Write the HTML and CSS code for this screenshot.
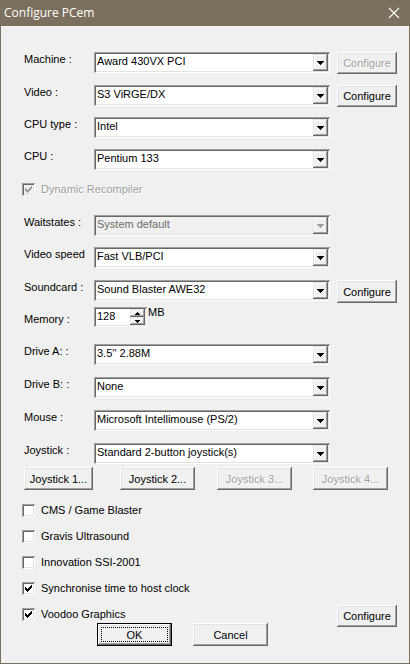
FILE: index.html
```html
<!DOCTYPE html>
<html>
<head>
<meta charset="utf-8">
<title>Configure PCem</title>
<link rel="stylesheet" href="styles.css">
</head>
<body>
<div class="window">
  <div class="titlebar">
    <span class="title">Configure PCem</span>
    <svg class="close" width="12" height="12" viewBox="0 0 12 12"><path d="M1 1L11 11M11 1L1 11" stroke="#fff" stroke-width="1.1" fill="none"/></svg>
  </div>
  <div class="client">
    <div class="row">
      <span class="lbl">Machine :</span>
      <div class="combo"><span class="val">Award 430VX PCI</span><span class="drop"><svg class="arr" width="7" height="4" viewBox="0 0 7 4"><path d="M0 0h7v1h-1v1h-1v1h-1v1h-1v-1h-1v-1h-1v-1h-1z"/></svg></span></div>
      <button class="btn cfg" disabled>Configure</button>
    </div>
    <div class="row gap12">
      <span class="lbl">Video :</span>
      <div class="combo"><span class="val">S3 ViRGE/DX</span><span class="drop"><svg class="arr" width="7" height="4" viewBox="0 0 7 4"><path d="M0 0h7v1h-1v1h-1v1h-1v1h-1v-1h-1v-1h-1v-1h-1z"/></svg></span></div>
      <button class="btn cfg">Configure</button>
    </div>
    <div class="row gap11">
      <span class="lbl">CPU type :</span>
      <div class="combo"><span class="val">Intel</span><span class="drop"><svg class="arr" width="7" height="4" viewBox="0 0 7 4"><path d="M0 0h7v1h-1v1h-1v1h-1v1h-1v-1h-1v-1h-1v-1h-1z"/></svg></span></div>
    </div>
    <div class="row gap11">
      <span class="lbl">CPU :</span>
      <div class="combo"><span class="val">Pentium 133</span><span class="drop"><svg class="arr" width="7" height="4" viewBox="0 0 7 4"><path d="M0 0h7v1h-1v1h-1v1h-1v1h-1v-1h-1v-1h-1v-1h-1z"/></svg></span></div>
    </div>
    <div class="check-row disabled gap13">
      <span class="box"><svg class="tick" width="7" height="7" viewBox="0 0 7 7"><path d="M6 0h1v1h-1zM5 1h2v1h-2zM0 2h1v1h-1zM4 2h3v1h-3zM0 3h2v1h-2zM3 3h3v1h-3zM0 4h5v1h-5zM1 5h3v1h-3zM2 6h1v1h-1z"/></svg></span>
      <span class="ctext">Dynamic Recompiler</span>
    </div>
    <div class="row gap19">
      <span class="lbl">Waitstates :</span>
      <div class="combo off"><span class="val">System default</span><span class="drop"><svg class="arr" width="7" height="4" viewBox="0 0 7 4"><path d="M0 0h7v1h-1v1h-1v1h-1v1h-1v-1h-1v-1h-1v-1h-1z"/></svg></span></div>
    </div>
    <div class="row gap11">
      <span class="lbl">Video speed</span>
      <div class="combo"><span class="val">Fast VLB/PCI</span><span class="drop"><svg class="arr" width="7" height="4" viewBox="0 0 7 4"><path d="M0 0h7v1h-1v1h-1v1h-1v1h-1v-1h-1v-1h-1v-1h-1z"/></svg></span></div>
    </div>
    <div class="row gap12">
      <span class="lbl">Soundcard :</span>
      <div class="combo"><span class="val">Sound Blaster AWE32</span><span class="drop"><svg class="arr" width="7" height="4" viewBox="0 0 7 4"><path d="M0 0h7v1h-1v1h-1v1h-1v1h-1v-1h-1v-1h-1v-1h-1z"/></svg></span></div>
      <button class="btn cfg tall">Configure</button>
    </div>
    <div class="row mem-row">
      <span class="lbl low">Memory :</span>
      <div class="spin">
        <span class="val">128</span>
        <span class="updown">
          <span class="udb"><svg width="5" height="3" viewBox="0 0 5 3"><path d="M2 0h1v1h1v1h1v1h-5v-1h1v-1h1z"/></svg></span>
          <span class="udb"><svg width="5" height="3" viewBox="0 0 5 3"><path d="M0 0h5v1h-1v1h-1v1h-1v-1h-1v-1h-1z"/></svg></span>
        </span>
      </div>
      <span class="unit">MB</span>
    </div>
    <div class="row gap17">
      <span class="lbl">Drive A: :</span>
      <div class="combo"><span class="val">3.5'' 2.88M</span><span class="drop"><svg class="arr" width="7" height="4" viewBox="0 0 7 4"><path d="M0 0h7v1h-1v1h-1v1h-1v1h-1v-1h-1v-1h-1v-1h-1z"/></svg></span></div>
    </div>
    <div class="row gap12">
      <span class="lbl">Drive B: :</span>
      <div class="combo"><span class="val">None</span><span class="drop"><svg class="arr" width="7" height="4" viewBox="0 0 7 4"><path d="M0 0h7v1h-1v1h-1v1h-1v1h-1v-1h-1v-1h-1v-1h-1z"/></svg></span></div>
    </div>
    <div class="row gap12">
      <span class="lbl">Mouse :</span>
      <div class="combo"><span class="val">Microsoft Intellimouse (PS/2)</span><span class="drop"><svg class="arr" width="7" height="4" viewBox="0 0 7 4"><path d="M0 0h7v1h-1v1h-1v1h-1v1h-1v-1h-1v-1h-1v-1h-1z"/></svg></span></div>
    </div>
    <div class="row gap12">
      <span class="lbl">Joystick :</span>
      <div class="combo"><span class="val">Standard 2-button joystick(s)</span><span class="drop"><svg class="arr" width="7" height="4" viewBox="0 0 7 4"><path d="M0 0h7v1h-1v1h-1v1h-1v1h-1v-1h-1v-1h-1v-1h-1z"/></svg></span></div>
    </div>
    <div class="joy-row">
      <button class="btn joy j1">Joystick 1...</button>
      <button class="btn joy j2">Joystick 2...</button>
      <button class="btn joy j3" disabled>Joystick 3...</button>
      <button class="btn joy j4" disabled>Joystick 4...</button>
    </div>
    <div class="check-row gap14">
      <span class="box"></span>
      <span class="ctext">CMS / Game Blaster</span>
    </div>
    <div class="check-row gap13">
      <span class="box"></span>
      <span class="ctext">Gravis Ultrasound</span>
    </div>
    <div class="check-row gap13">
      <span class="box"></span>
      <span class="ctext">Innovation SSI-2001</span>
    </div>
    <div class="check-row gap13">
      <span class="box"><svg class="tick" width="7" height="7" viewBox="0 0 7 7"><path d="M6 0h1v1h-1zM5 1h2v1h-2zM0 2h1v1h-1zM4 2h3v1h-3zM0 3h2v1h-2zM3 3h3v1h-3zM0 4h5v1h-5zM1 5h3v1h-3zM2 6h1v1h-1z"/></svg></span>
      <span class="ctext">Synchronise time to host clock</span>
    </div>
    <div class="check-row gap13 voodoo">
      <span class="box"><svg class="tick" width="7" height="7" viewBox="0 0 7 7"><path d="M6 0h1v1h-1zM5 1h2v1h-2zM0 2h1v1h-1zM4 2h3v1h-3zM0 3h2v1h-2zM3 3h3v1h-3zM0 4h5v1h-5zM1 5h3v1h-3zM2 6h1v1h-1z"/></svg></span>
      <span class="ctext">Voodoo Graphics</span>
      <button class="btn cfg end">Configure</button>
    </div>
    <div class="action-row">
      <button class="btn action default">OK</button>
      <button class="btn action cancel">Cancel</button>
    </div>
  </div>
</div>
</body>
</html>
```
FILE: styles.css
```css
html, body {
  margin: 0;
  padding: 0;
  background: #7b705e;
}

.window {
  width: 410px;
  height: 664px;
  box-sizing: border-box;
  padding: 0 1px 1px 1px;
  background: #7b705e;
  display: flex;
  flex-direction: column;
  font-family: "Liberation Sans", Arial, sans-serif;
  font-size: 11px;
  color: #000;
}

.titlebar {
  height: 26px;
  flex: none;
  display: flex;
  align-items: center;
  justify-content: space-between;
  padding: 0 9px 0 3px;
}

.title {
  font-family: "Open Sans", "Noto Sans", sans-serif;
  font-size: 12px;
  color: #fff;
  line-height: 16px;
}

.close {
  display: block;
}

.client {
  flex: 1;
  background: #f0f0f0;
  padding: 26px 12px 0 23px;
  display: flex;
  flex-direction: column;
}

.row {
  display: flex;
  align-items: flex-start;
  height: 21px;
  flex: none;
}

.gap11 { margin-top: 11px; }
.gap12 { margin-top: 12px; }
.gap13 { margin-top: 13px; }
.gap14 { margin-top: 14px; }
.gap17 { margin-top: 17px; }
.gap19 { margin-top: 19px; }

.lbl {
  width: 70px;
  flex: none;
  line-height: 13px;
  padding-top: 1px;
  white-space: nowrap;
}

.lbl.low {
  padding-top: 6px;
}

.combo {
  width: 236px;
  height: 21px;
  box-sizing: border-box;
  padding: 2px;
  display: flex;
  background: #fff;
  box-shadow: inset 1px 1px #a0a0a0, inset -1px -1px #fff, inset 2px 2px #696969, inset -2px -2px #e3e3e3;
  flex: none;
}

.combo .val {
  flex: 1;
  padding-left: 1px;
  padding-top: 1px;
  line-height: 13px;
  white-space: nowrap;
  overflow: hidden;
}

.combo.off {
  background: #f0f0f0;
}

.combo.off .val {
  color: #6d6d6d;
}

.drop {
  width: 15px;
  height: 17px;
  flex: none;
  display: flex;
  align-items: center;
  justify-content: center;
  background: #f0f0f0;
  box-shadow: inset -1px -1px #696969, inset 1px 1px #e3e3e3, inset -2px -2px #a0a0a0, inset 2px 2px #fff;
  color: #000;
}

.combo.off .drop {
  color: #a0a0a0;
}

.arr {
  display: block;
  fill: currentColor;
}

.btn {
  font-family: "Liberation Sans", Arial, sans-serif;
  font-size: 11px;
  color: #000;
  background: #f0f0f0;
  border: none;
  padding: 0;
  margin: 0;
  box-sizing: border-box;
  box-shadow: inset -1px -1px #696969, inset 1px 1px #fff, inset -2px -2px #a0a0a0, inset 2px 2px #e3e3e3;
  flex: none;
}

.btn:disabled {
  color: #a0a0a0;
  text-shadow: 1px 1px #fff;
}

.cfg {
  width: 60px;
  height: 22px;
  margin-left: 7px;
}

.cfg.tall {
  height: 23px;
}

.mem-row {
  margin-top: 6px;
  height: 20px;
}

.spin {
  width: 53px;
  height: 20px;
  box-sizing: border-box;
  padding: 2px;
  display: flex;
  background: #fff;
  box-shadow: inset 1px 1px #a0a0a0, inset -1px -1px #fff, inset 2px 2px #696969, inset -2px -2px #e3e3e3;
  flex: none;
}

.spin .val {
  flex: 1;
  padding-left: 1px;
  line-height: 13px;
  padding-top: 1px;
}

.updown {
  width: 15px;
  display: flex;
  flex-direction: column;
}

.udb {
  height: 8px;
  display: flex;
  align-items: center;
  justify-content: center;
  background: #f0f0f0;
  box-shadow: inset -1px -1px #696969, inset 1px 1px #e3e3e3, inset -2px -2px #a0a0a0, inset 2px 2px #fff;
}

.udb svg {
  display: block;
  fill: #000;
}

.unit {
  margin-left: 1px;
  margin-top: -1px;
  line-height: 13px;
}

.joy-row {
  display: flex;
  margin-top: 3px;
  height: 23px;
  flex: none;
}

.joy {
  height: 23px;
  width: 75px;
}

.j1 { width: 69px; }
.j2 { margin-left: 27px; }
.j3 { margin-left: 22px; }
.j4 { margin-left: 21px; }

.check-row {
  display: flex;
  align-items: flex-start;
  height: 13px;
  margin-left: -2px;
  flex: none;
}

.box {
  width: 13px;
  height: 13px;
  box-sizing: border-box;
  padding: 3px;
  background: #fff;
  box-shadow: inset 1px 1px #a0a0a0, inset -1px -1px #fff, inset 2px 2px #696969, inset -2px -2px #e3e3e3;
  flex: none;
}

.tick {
  display: block;
  fill: #000;
}

.ctext {
  margin-left: 6px;
  line-height: 13px;
  white-space: nowrap;
}

.check-row.disabled .box {
  background: #f0f0f0;
}

.check-row.disabled .tick {
  fill: #a0a0a0;
}

.check-row.disabled .ctext {
  color: #a0a0a0;
  text-shadow: 1px 1px #fff;
}

.voodoo .end {
  margin-left: auto;
  margin-top: -3px;
}

.action-row {
  display: flex;
  margin-top: 2px;
  padding-left: 73px;
  flex: none;
}

.action {
  width: 75px;
  height: 23px;
}

.action.default {
  box-shadow: inset 0 0 0 1px #000, inset -2px -2px #696969, inset 2px 2px #fff, inset -3px -3px #a0a0a0, inset 3px 3px #e3e3e3;
  outline: 1px dotted #000;
  outline-offset: -5px;
}

.cancel {
  margin-left: 21px;
}
```
